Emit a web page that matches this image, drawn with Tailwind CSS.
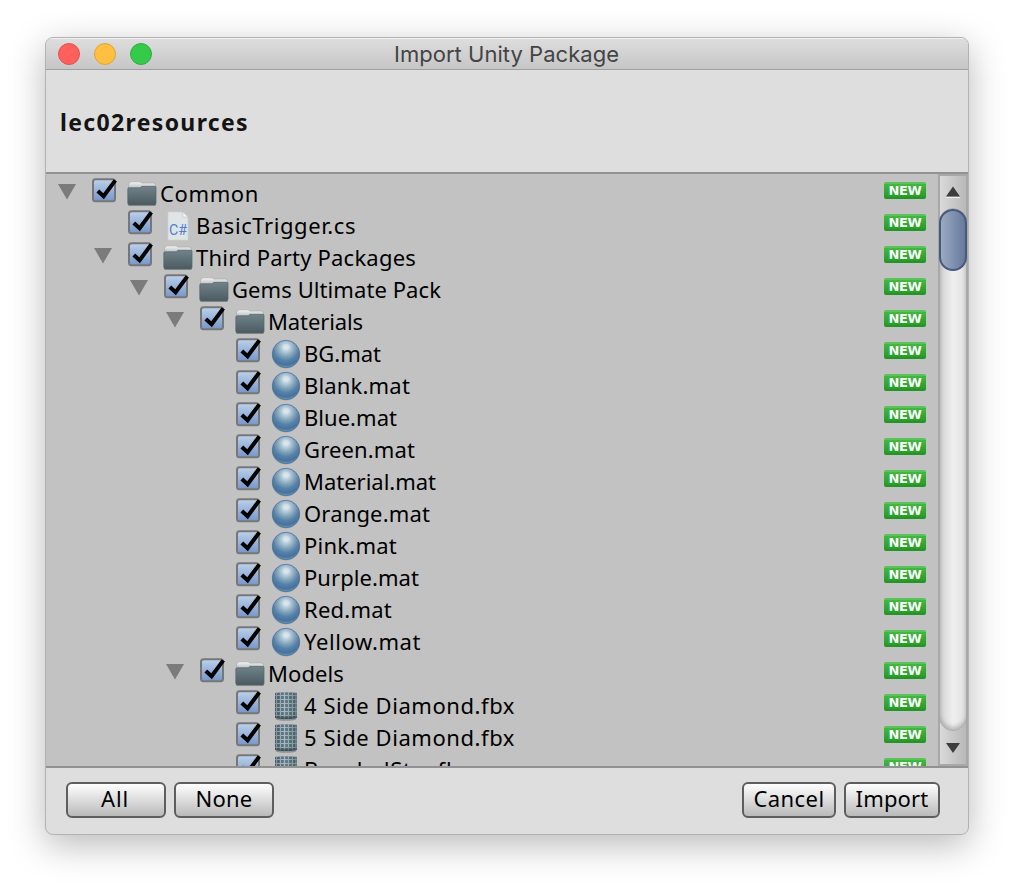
<!DOCTYPE html>
<html lang="en">
<head>
<meta charset="utf-8">
<title>Import Unity Package</title>
<script src="https://cdn.jsdelivr.net/npm/@tailwindcss/browser@4"></script>
</head>
<body class="bg-white w-[1014px] h-[888px] overflow-hidden pt-[37px] pl-[45px] font-['Noto_Sans','Open_Sans',sans-serif] text-black">
<svg width="0" height="0" class="absolute">
  <defs>
    <linearGradient id="gBox" x2="0" y2="1"><stop stop-color="#bdd2ec"/><stop offset="1" stop-color="#7396c9"/></linearGradient>
    <linearGradient id="gFold" x2="0" y2="1"><stop stop-color="#71838a"/><stop offset="1" stop-color="#4a5a60"/></linearGradient>
    <linearGradient id="gTab" x2="0" y2="1"><stop stop-color="#f4f4f4"/><stop offset="1" stop-color="#b5b8b9"/></linearGradient>
    <radialGradient id="gBall" cx=".5" cy=".26" r=".74"><stop stop-color="#dbe6ec"/><stop offset=".18" stop-color="#bdd1dd"/><stop offset=".42" stop-color="#85a6bf"/><stop offset=".65" stop-color="#5681a7"/><stop offset=".85" stop-color="#46729d"/><stop offset="1" stop-color="#6797bd"/></radialGradient>
    <linearGradient id="gMesh"><stop stop-color="#43575f"/><stop offset=".45" stop-color="#657c87"/><stop offset="1" stop-color="#435860"/></linearGradient>
    <linearGradient id="gMeshLine" gradientUnits="userSpaceOnUse" x1="0" x2="24" y1="0" y2="0"><stop stop-color="#74888f"/><stop offset=".4" stop-color="#a9bdc6"/><stop offset="1" stop-color="#74888f"/></linearGradient>
    <linearGradient id="gMeshShade" x2="0" y2="1"><stop offset=".85" stop-color="#2c3d45" stop-opacity="0"/><stop offset="1" stop-color="#2c3d45" stop-opacity=".85"/></linearGradient>
    <symbol id="check" viewBox="0 0 28 26"><rect x="1" y="1.300" width="22" height="22" rx="2.500" fill="url(#gBox)" stroke="#777" stroke-width="2"/><path d="M5.800 13L11.600 18.300L23.300 2.400" fill="none" stroke="#000" stroke-width="4"/></symbol>
    <symbol id="folder" viewBox="0 0 30 26"><rect x="1" y="23" width="28" height="2" rx="1" fill="#000" opacity=".22"/><path d="M1.500 8V3.500Q2 .8 4.500 .8H12Q14 .8 14.800 2H26.500Q28.500 2 28.500 4.500V8Z" fill="url(#gTab)" stroke="#9b9e9f" stroke-width=".5"/><path d="M.8 8Q.8 6.800 2 6.800H12Q13.500 6.800 15 5.300H28Q29 5.300 29 6.300V22Q29 24 27.500 24H2.500Q.8 24 .8 22Z" fill="url(#gFold)" stroke="#54646a" stroke-width=".7"/></symbol>
    <symbol id="ball" viewBox="0 0 30 30"><ellipse cx="15" cy="16" rx="14" ry="13.600" fill="#000" opacity=".12"/><circle cx="15" cy="15" r="13.700" fill="url(#gBall)" stroke="#4d7190" stroke-width=".8"/><ellipse cx="15" cy="8" rx="3.500" ry="3" fill="#e9f1f5" opacity=".35"/></symbol>
    <symbol id="mesh" viewBox="0 0 24 30"><ellipse cx="12" cy="28" rx="10.500" ry="1.800" fill="#000" opacity=".25"/><path d="M1 2Q12 .3 23 2V27Q12 29 1 27Z" fill="url(#gMesh)"/><path d="M1 4.500H23M1 8.500H23M1 12.500H23M1 16.500H23M1 20.500H23M1 24.500H23" stroke="url(#gMeshLine)" stroke-width="1.200" fill="none"/><path d="M2.500 1.500V27M6.500 1.200V27.500M10.500 1V28M14.500 1V28M18.500 1.200V27.500M22 1.500V27" stroke="url(#gMeshLine)" stroke-width="1.200" fill="none"/><path d="M1 2Q12 .3 23 2V27Q12 29 1 27Z" fill="url(#gMeshShade)"/></symbol>
  </defs>
</svg>
<main class="w-[924px] h-[798px] flex flex-col rounded-[8px] border border-[#b2b2b2] bg-[#dedede] overflow-hidden shadow-[0_10px_36px_rgba(0,0,0,0.28)]">
  <header class="h-[32px] shrink-0 relative flex items-center gap-[14px] pl-[12px] border-b border-[#a0a0a0] border-t border-t-[#f1f1f1] bg-linear-to-b from-[#dddddd] to-[#c6c6c6]">
    <span class="size-[22px] rounded-full bg-[#ff605c] border border-[#e2504c]"></span>
    <span class="size-[22px] rounded-full bg-[#ffbf41] border border-[#e1a33a]"></span>
    <span class="size-[22px] rounded-full bg-[#34ca4a] border border-[#2bae3c]"></span>
    <h1 class="absolute left-[348px] top-0 leading-[30px] text-[22px] text-[#444] whitespace-nowrap font-['Inter',sans-serif]"><span data-w="225" data-font="22px Inter">Import Unity Package</span></h1>
  </header>
  <section class="h-[102px] shrink-0 flex items-center pl-[14px] pt-[3px] text-[23px] font-bold text-[#141414]"><span data-w="189" data-font="bold 23px 'Noto Sans'" class="whitespace-nowrap">lec02resources</span></section>
  <section class="h-[596px] shrink-0 flex border-y-2 border-[#929292] bg-[#c2c2c2]">
    <div id="tree" class="flex-1 h-full overflow-hidden pt-[4px]"></div>
    <div class="w-[30px] h-full flex flex-col items-center border-2 border-[#a8a8a8] bg-linear-to-r from-[#dadada] to-[#b8b8b8]">
      <svg class="shrink-0" width="26" height="32"><path d="M6 20.500L13 10.500L20 20.500Z" fill="#3c3c3c"/><path d="M6 21.500H20" stroke="#eee"/></svg>
      <div class="w-[28px] h-[523px] shrink-0 rounded-[14px] border border-[#aaa] bg-linear-to-r from-[#d2d2d2] via-[#efefef] to-[#e0e0e0] shadow-[inset_0_-3px_4px_rgba(0,0,0,0.22)]">
        <div class="w-[28px] h-[62px] -ml-px rounded-[14px] border-2 border-[#475a7c] bg-linear-to-r from-[#9babc4] to-[#667a9c]"></div>
      </div>
      <svg class="shrink-0" width="26" height="32"><path d="M6 12L13 22L20 12Z" fill="#3c3c3c"/></svg>
    </div>
  </section>
  <footer class="flex-1 flex items-start gap-[8px] pl-[20px] pr-[28px] pt-[14px] text-[22px] leading-[28px]">
    <button class="w-[100px] h-[36px] pb-[5px] flex items-center justify-center rounded-[6px] border-2 border-[#5e5e5e] bg-linear-to-b from-white to-[#bababa]"><span data-w="28" data-font="22px 'Noto Sans'" class="-ml-[2px]">All</span></button>
    <button class="w-[100px] h-[36px] pb-[5px] flex items-center justify-center rounded-[6px] border-2 border-[#5e5e5e] bg-linear-to-b from-white to-[#bababa]"><span data-w="57" data-font="22px 'Noto Sans'">None</span></button>
    <button class="ml-auto w-[94px] h-[36px] pb-[5px] flex items-center justify-center rounded-[6px] border-2 border-[#5e5e5e] bg-linear-to-b from-white to-[#bababa]"><span data-w="71" data-font="22px 'Noto Sans'">Cancel</span></button>
    <button class="w-[96px] h-[36px] pb-[5px] flex items-center justify-center rounded-[6px] border-2 border-[#5e5e5e] bg-linear-to-b from-white to-[#bababa]"><span data-w="73" data-font="22px 'Noto Sans'">Import</span></button>
  </footer>
</main>
<script>
// depth, icon, label, label width
const rows = [
  [0,'folder','Common',99],[1,'cs','BasicTrigger.cs',160],[1,'folder','Third Party Packages',220],
  [2,'folder','Gems Ultimate Pack',209],[3,'folder','Materials',95],
  [4,'ball','BG.mat',77],[4,'ball','Blank.mat',106],[4,'ball','Blue.mat',93],[4,'ball','Green.mat',111],
  [4,'ball','Material.mat',132],[4,'ball','Orange.mat',126],[4,'ball','Pink.mat',93],[4,'ball','Purple.mat',115],
  [4,'ball','Red.mat',88],[4,'ball','Yellow.mat',117],[3,'folder','Models',76],
  [4,'mesh','4 Side Diamond.fbx',211],[4,'mesh','5 Side Diamond.fbx',211],[4,'mesh','BeveledStar.fbx',168]
];
const icons = {
  folder: '<svg class="w-[30px] h-[26px] mt-[3px] ml-[-1px] mr-[-1px]"><use href="#folder"/></svg>',
  ball: '<svg class="w-[30px] h-[30px] mt-[1px] ml-[-1px] mr-[-1px]"><use href="#ball"/></svg>',
  mesh: '<svg class="w-[24px] h-[30px] mt-[1px] ml-[2px] mr-[2px]"><use href="#mesh"/></svg>',
  cs: '<svg class="w-[24px] h-[30px] mt-[1px] ml-[2px] mr-[2px]" viewBox="0 0 24 30"><path d="M2 1H17L22 6V29H2Z" fill="#dfe4e6" stroke="#cdd1d3" stroke-width=".6"/><path d="M17 1V6H22Z" fill="#fff" stroke="#b8bcbe" stroke-width=".6"/><text x="3" y="23.500" font-size="14" textLength="18" lengthAdjust="spacingAndGlyphs" font-family="Roboto, sans-serif" fill="#5280cf">C#</text></svg>'
};
document.getElementById('tree').innerHTML = rows.map(([d, icon, label, w]) => `
  <div class="h-[32px] flex items-start pr-[12px]">
    <div class="shrink-0 flex justify-end" style="width:${46 + d * 36}px">${icon === 'folder' ? '<svg class="w-[18px] h-[16px] mt-[6px] mr-[16px]"><path d="M0 0H18L9 15.500Z" fill="#7b7b7b"/></svg>' : ''}</div>
    <svg class="shrink-0 w-[28px] h-[26px] mr-[8px]"><use href="#check"/></svg>
    <div class="shrink-0 flex w-[32px]">${icons[icon]}</div>
    <span class="text-[22px] leading-[30px] whitespace-nowrap" data-font="22px 'Noto Sans'" data-w="${w}">${label}</span>
    <span class="ml-auto mt-[4px] w-[42px] h-[17px] rounded-[2px] border-t-2 border-t-[#5cc25c] border-b-2 border-b-[#259425] bg-linear-to-b from-[#43b743] to-[#229f24] text-white text-[13px] leading-[13px] font-bold flex justify-center items-center font-['DejaVu_Sans',sans-serif]"><span data-font="bold 13px 'DejaVu Sans'" data-w="33">NEW</span></span>
  </div>`).join('');
// tune tracking so each label takes its own width
const ctx = document.createElement('canvas').getContext('2d');
document.querySelectorAll('[data-w]').forEach(el => {
  ctx.font = el.dataset.font;
  const t = el.textContent;
  el.style.letterSpacing = ((+el.dataset.w - ctx.measureText(t).width) / t.length).toFixed(3) + 'px';
});
</script>
</body>
</html>
